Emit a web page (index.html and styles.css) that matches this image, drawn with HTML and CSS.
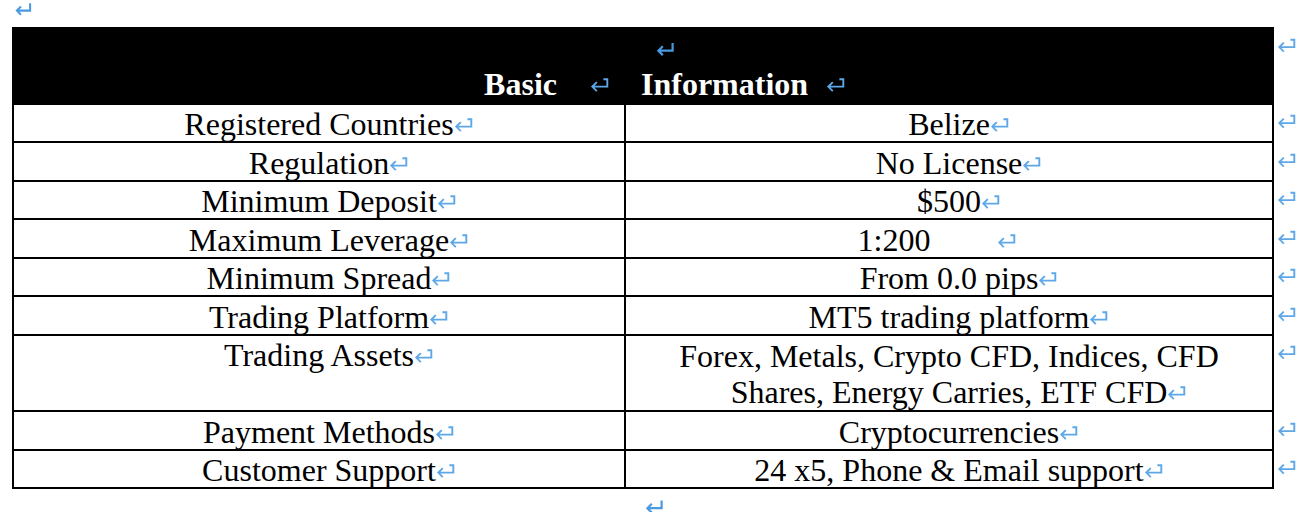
FILE: index.html
```html
<!DOCTYPE html>
<html lang="en">
<head>
<meta charset="utf-8">
<title>Basic Information</title>
<link rel="stylesheet" href="styles.css">
</head>
<body>
<svg class="sprite" aria-hidden="true">
  <symbol id="ret-a" viewBox="0 0 19 14">
    <path d="M13.4 1.3 H17.3 V8.6 H2.3 M6.8 4.1 L2.3 8.6 L6.8 13.1" fill="none" stroke="currentColor" stroke-width="1.9"/>
  </symbol>
  <symbol id="ret-b" viewBox="0 0 19 14">
    <path d="M16.6 0.4 V8.2 H2.4 M6.8 3.8 L2.4 8.2 L6.8 12.6" fill="none" stroke="currentColor" stroke-width="2.2"/>
  </symbol>
</svg>
<div class="page">
  <div class="top-mark"><svg class="ret ret-b"><use href="#ret-b"/></svg></div>
  <table class="info">
    <colgroup><col class="c1"><col class="c2"><col class="c3"></colgroup>
    <thead>
      <tr>
        <th class="h-left">Basic<svg class="ret gap-basic"><use href="#ret-a"/></svg></th>
        <th class="h-right">
          <div class="h-line1"><svg class="ret ret-b"><use href="#ret-b"/></svg></div>
          <div>Information<svg class="ret gap-info"><use href="#ret-a"/></svg></div>
        </th>
        <td class="end end-h"><svg class="ret mark"><use href="#ret-a"/></svg></td>
      </tr>
    </thead>
    <tbody>
      <tr>
        <td class="cell">Registered Countries<svg class="ret hang"><use href="#ret-a"/></svg></td>
        <td class="cell">Belize<svg class="ret hang"><use href="#ret-a"/></svg></td>
        <td class="end"><svg class="ret mark"><use href="#ret-a"/></svg></td>
      </tr>
      <tr>
        <td class="cell">Regulation<svg class="ret hang"><use href="#ret-a"/></svg></td>
        <td class="cell">No License<svg class="ret hang"><use href="#ret-a"/></svg></td>
        <td class="end"><svg class="ret mark"><use href="#ret-a"/></svg></td>
      </tr>
      <tr>
        <td class="cell">Minimum Deposit<svg class="ret hang"><use href="#ret-a"/></svg></td>
        <td class="cell">$500<svg class="ret hang"><use href="#ret-a"/></svg></td>
        <td class="end"><svg class="ret mark"><use href="#ret-a"/></svg></td>
      </tr>
      <tr>
        <td class="cell">Maximum Leverage<svg class="ret hang"><use href="#ret-a"/></svg></td>
        <td class="cell">1:200<svg class="ret lev"><use href="#ret-a"/></svg></td>
        <td class="end"><svg class="ret mark"><use href="#ret-a"/></svg></td>
      </tr>
      <tr>
        <td class="cell">Minimum Spread<svg class="ret hang"><use href="#ret-a"/></svg></td>
        <td class="cell">From 0.0 pips<svg class="ret hang"><use href="#ret-a"/></svg></td>
        <td class="end"><svg class="ret mark"><use href="#ret-a"/></svg></td>
      </tr>
      <tr>
        <td class="cell">Trading Platform<svg class="ret hang"><use href="#ret-a"/></svg></td>
        <td class="cell">MT5 trading platform<svg class="ret hang"><use href="#ret-a"/></svg></td>
        <td class="end"><svg class="ret mark"><use href="#ret-a"/></svg></td>
      </tr>
      <tr>
        <td class="cell">Trading Assets<svg class="ret hang"><use href="#ret-a"/></svg></td>
        <td class="cell multi">Forex, Metals, Crypto CFD, Indices, CFD Shares, Energy Carries, ETF CFD<svg class="ret hang"><use href="#ret-a"/></svg></td>
        <td class="end"><svg class="ret mark"><use href="#ret-a"/></svg></td>
      </tr>
      <tr>
        <td class="cell">Payment Methods<svg class="ret hang"><use href="#ret-a"/></svg></td>
        <td class="cell">Cryptocurrencies<svg class="ret hang"><use href="#ret-a"/></svg></td>
        <td class="end"><svg class="ret mark"><use href="#ret-a"/></svg></td>
      </tr>
      <tr>
        <td class="cell">Customer Support<svg class="ret hang"><use href="#ret-a"/></svg></td>
        <td class="cell">24 x5, Phone &amp; Email support<svg class="ret hang"><use href="#ret-a"/></svg></td>
        <td class="end"><svg class="ret mark"><use href="#ret-a"/></svg></td>
      </tr>
    </tbody>
  </table>
  <div class="bottom-mark"><svg class="ret ret-b hang"><use href="#ret-b"/></svg></div>
</div>
</body>
</html>
```

FILE: styles.css
```css
* { box-sizing: border-box; }

html, body {
  margin: 0;
  padding: 0;
  background: #ffffff;
}

body {
  font-family: "Liberation Serif", "Times New Roman", serif;
  color: #000000;
  overflow: hidden;
}

.sprite {
  position: absolute;
  width: 0;
  height: 0;
  overflow: hidden;
}

.page {
  width: 1310px;
  padding-left: 12px;
}

/* return marks (Word paragraph marks) */
.ret {
  display: inline-block;
  width: 19px;
  height: 14px;
  color: #5ea8e8;
  vertical-align: 3px;
}

.ret-b {
  color: #4a9ae2;
}

.hang {
  margin-right: -19px;
}

.lev {
  margin-left: 67px;
  margin-right: 24px;
}

.gap-basic { margin-left: 33px; }
.gap-info { margin-left: 18px; }

.top-mark {
  height: 27px;
  padding: 3px 0 0 2px;
}

.top-mark .ret {
  display: block;
  height: 13px;
}

/* table */
.info {
  border-collapse: collapse;
  table-layout: fixed;
  width: 1300px;
  font-size: 32px;
}

.c1 { width: 612px; }
.c2 { width: 648px; }
.c3 { width: 40px; }

.info th {
  background: #000000;
  color: #ffffff;
  font-weight: bold;
  line-height: 36px;
  padding: 1px 0;
  border: 2px solid #000000;
  vertical-align: bottom;
}

.h-left {
  text-align: right;
  padding-right: 15px !important;
}

.h-right {
  text-align: left;
  padding-left: 15px !important;
}

.h-line1 .ret {
  margin-left: 15px;
  vertical-align: 2px;
  height: 15px;
}

.info td.cell {
  border: 2px solid #000000;
  text-align: center;
  vertical-align: top;
  line-height: 33px;
  padding: 3.45px 6px 0;
}

.info td.multi {
  line-height: 35.6px;
}

.info td.end {
  border: none;
  vertical-align: top;
  text-align: left;
  line-height: 33px;
  padding: 3.45px 0 0 3px;
}

.info td.end-h {
  line-height: 36px;
  padding-top: 1px;
}

.mark {
  height: 15px;
  vertical-align: 5px;
}

.bottom-mark {
  width: 1266px;
  text-align: center;
  padding-top: 11px;
  font-size: 16px;
  line-height: 14px;
}
```
